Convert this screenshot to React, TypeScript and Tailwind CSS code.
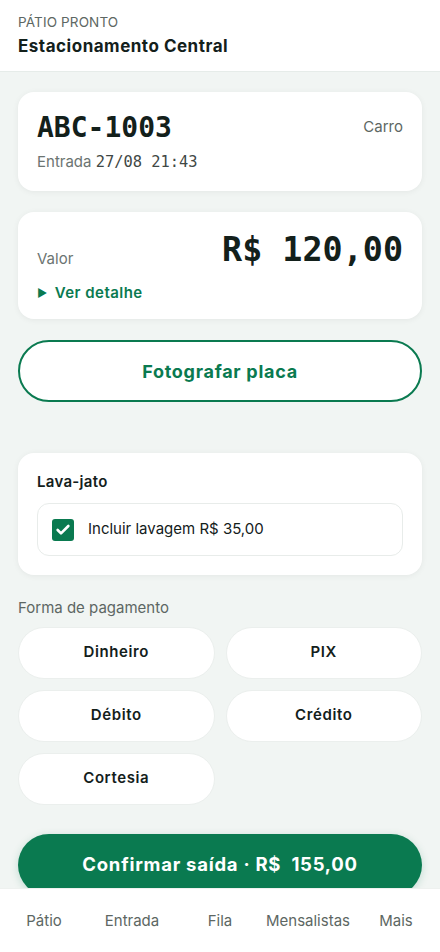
import { Check } from 'lucide-react';

const metodos = ['Dinheiro', 'PIX', 'Débito', 'Crédito', 'Cortesia'];
const abas = ['Pátio', 'Entrada', 'Fila', 'Mensalistas', 'Mais'];

const mono = "font-['DejaVu_Sans_Mono',monospace]";

export default function App() {
  return (
    <div className="relative min-h-[952px] bg-[#f1f5f3] font-['Inter',sans-serif] text-[#13201b]">
      <header className="h-[72px] bg-white border-b border-[#e6ece9] px-[18px] pt-[14px]">
        <div className="text-[13.5px] leading-4 text-[#5d6763] tracking-[0.01em]">PÁTIO PRONTO</div>
        <div className="mt-[6px] text-[17px] leading-5 font-bold tracking-[0.03em]">Estacionamento Central</div>
      </header>

      <main className="px-[18px] pt-[20px] pb-[80px] flex flex-col">
        <section className="h-[99px] rounded-2xl bg-white shadow-[0_1px_6px_rgba(0,0,0,0.06)] px-[19px] pt-[18px]">
          <div className="flex items-start justify-between">
            <span className={`${mono} text-[28px] leading-[36px] font-bold`}>ABC-1003</span>
            <span className="text-[15px] text-[#5d6763] mt-[6px]">Carro</span>
          </div>
          <div className="mt-[5px] text-[15px] text-[#6b7471]">
            Entrada <span className={`${mono} text-[15.4px] text-[#3f4845]`}>27/08 21:43</span>
          </div>
        </section>

        <section className="mt-[21px] h-[107px] rounded-2xl bg-white shadow-[0_1px_6px_rgba(0,0,0,0.06)] px-[19px] pt-[16px]">
          <div className="flex items-end justify-between">
            <span className="text-[15px] text-[#6b7471] mb-[2px]">Valor</span>
            <span className={`${mono} text-[33.4px] leading-[44px] font-bold`}>R$ 120,00</span>
          </div>
          <div className="mt-[10px] flex items-center gap-[7px] text-[15px] font-semibold tracking-[0.03em] text-[#0a7a50]">
            <span className="text-[11px]">▶</span>
            <span>Ver detalhe</span>
          </div>
        </section>

        <button className="mt-[21px] h-[62px] rounded-full border-2 border-[#0a7a50] bg-white text-[18px] font-bold tracking-[0.04em] text-[#0a7a50]">
          Fotografar placa
        </button>

        <section className="mt-[51px] h-[122px] rounded-2xl bg-white shadow-[0_1px_6px_rgba(0,0,0,0.06)] px-[19px] pt-[19px]">
          <div className="text-[15px] font-semibold leading-5 tracking-[0.02em]">Lava-jato</div>
          <label className="mt-[11px] h-[53px] flex items-center gap-[14px] rounded-xl border border-[#e8ecea] px-[14px]">
            <span className="w-[22px] h-[22px] rounded-[3px] bg-[#0a7a50] flex items-center justify-center">
              <Check className="w-4 h-4 text-white" strokeWidth={4} />
            </span>
            <span className="text-[15px]">Incluir lavagem R$ 35,00</span>
          </label>
        </section>

        <div className="mt-[22px] text-[15px] text-[#5d6763]">Forma de pagamento</div>

        <div className="mt-[7px] grid grid-cols-2 gap-x-[11px] gap-y-[11px]">
          {metodos.map((m) => (
            <button
              key={m}
              className="h-[52px] rounded-full bg-white border border-[#ebefed] text-[15px] font-semibold tracking-[0.04em]"
            >
              {m}
            </button>
          ))}
        </div>

        <button className="mt-[29px] h-[62px] rounded-full bg-[#0a7a50] text-white text-[18.5px] font-bold tracking-[0.04em] shadow-[0_2px_8px_rgba(10,122,80,0.2)]">
          Confirmar saída · R$&nbsp;&nbsp;155,00
        </button>
      </main>

      <nav className="fixed bottom-0 left-0 right-0 h-[64px] bg-white border-t border-[#eef1ef] flex items-start pt-[21px] text-[15px] text-[#5d6763]">
        {abas.map((a) => (
          <div key={a} className="w-[88px] text-center">
            {a}
          </div>
        ))}
      </nav>
    </div>
  );
}
